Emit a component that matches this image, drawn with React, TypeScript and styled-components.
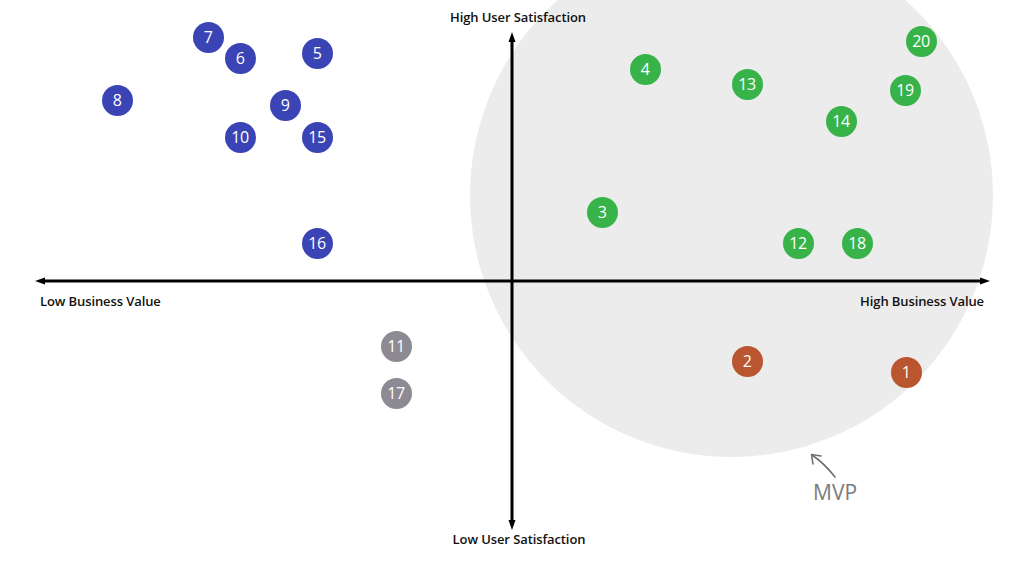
import React from "react";
import styled, { createGlobalStyle, css } from "styled-components";

const Global = createGlobalStyle`
  html, body { margin: 0; padding: 0; background: #ffffff; }
  body { font-family: "Open Sans", "Noto Sans", sans-serif; }
`;

const Stage = styled.div`
  position: relative;
  width: 1024px;
  height: 563px;
  overflow: hidden;
  background: #ffffff;
`;

const MvpZone = styled.div`
  position: absolute;
  left: 470px;
  top: -66px;
  width: 523px;
  height: 523px;
  border-radius: 50%;
  background: #ececec;
`;

const Axes = styled.svg`
  position: absolute;
  inset: 0;
  width: 1024px;
  height: 563px;
`;

const labelText = css`
  position: absolute;
  font-family: "Open Sans", "Noto Sans", sans-serif;
  font-weight: 600;
  font-size: 13px;
  letter-spacing: -0.1px;
  color: #111111;
  white-space: nowrap;
  line-height: 1;
`;

const TopLabel = styled.div`
  ${labelText};
  left: 518px;
  top: 11px;
  transform: translateX(-50%);
`;

const BottomLabel = styled.div`
  ${labelText};
  left: 519px;
  top: 533px;
  transform: translateX(-50%);
`;

const LeftLabel = styled.div`
  ${labelText};
  left: 40px;
  top: 295px;
`;

const RightLabel = styled.div`
  ${labelText};
  right: 40px;
  top: 295px;
`;

type Kind = "blue" | "green" | "gray" | "rust";
const colors: Record<Kind, string> = {
  blue: "#3a44b4",
  green: "#37b34a",
  gray: "#8d8a94",
  rust: "#b9552f",
};

const Dot = styled.div<{ $kind: Kind }>`
  position: absolute;
  width: 31px;
  height: 31px;
  margin: -15.5px 0 0 -15.5px;
  border-radius: 50%;
  background: ${(p) => colors[p.$kind]};
  color: #ffffff;
  display: flex;
  align-items: center;
  justify-content: center;
  font-family: "Open Sans", "Noto Sans", sans-serif;
  font-weight: 500;
  font-size: 16px;
  letter-spacing: -0.4px;
  line-height: 1;
`;

const MvpLabel = styled.div`
  position: absolute;
  left: 813px;
  top: 482px;
  font-family: "Open Sans", "Noto Sans", sans-serif;
  font-size: 21px;
  font-weight: 400;
  color: #7b7b7b;
  line-height: 1;
`;

const dots: { n: number; x: number; y: number; k: Kind }[] = [
  { n: 7, x: 208, y: 37, k: "blue" },
  { n: 6, x: 240, y: 58, k: "blue" },
  { n: 5, x: 317, y: 53, k: "blue" },
  { n: 8, x: 117, y: 100, k: "blue" },
  { n: 9, x: 285, y: 105, k: "blue" },
  { n: 10, x: 240, y: 137, k: "blue" },
  { n: 15, x: 317, y: 137, k: "blue" },
  { n: 16, x: 317, y: 243, k: "blue" },
  { n: 4, x: 645, y: 69, k: "green" },
  { n: 13, x: 747, y: 84, k: "green" },
  { n: 20, x: 921, y: 41, k: "green" },
  { n: 19, x: 905, y: 90, k: "green" },
  { n: 14, x: 841, y: 121, k: "green" },
  { n: 3, x: 602, y: 212, k: "green" },
  { n: 12, x: 798, y: 243, k: "green" },
  { n: 18, x: 857, y: 243, k: "green" },
  { n: 11, x: 396, y: 346, k: "gray" },
  { n: 17, x: 396, y: 393, k: "gray" },
  { n: 2, x: 747, y: 361, k: "rust" },
  { n: 1, x: 906, y: 372, k: "rust" },
];

export default function App() {
  return (
    <>
      <Global />
      <Stage>
        <MvpZone />
        <Axes viewBox="0 0 1024 563">
          <line x1="42" y1="281" x2="982" y2="281" stroke="#000" strokeWidth="3" />
          <polygon points="35,281 45,277.5 45,284.5" fill="#000" />
          <polygon points="990,281 980,277.5 980,284.5" fill="#000" />
          <line x1="512" y1="40" x2="512" y2="522" stroke="#000" strokeWidth="3" />
          <polygon points="512,32 508.5,42 515.5,42" fill="#000" />
          <polygon points="512,530 508.5,520 515.5,520" fill="#000" />
          <path d="M835 477 Q824 463 812 455" fill="none" stroke="#6f6f6f" strokeWidth="1.6" strokeLinecap="round" />
          <path d="M813 464 L811.5 454.5 L821 456" fill="none" stroke="#6f6f6f" strokeWidth="1.6" strokeLinecap="round" strokeLinejoin="round" />
        </Axes>
        <TopLabel>High User Satisfaction</TopLabel>
        <BottomLabel>Low User Satisfaction</BottomLabel>
        <LeftLabel>Low Business Value</LeftLabel>
        <RightLabel>High Business Value</RightLabel>
        {dots.map((d) => (
          <Dot key={d.n} $kind={d.k} style={{ left: d.x, top: d.y }}>
            {d.n}
          </Dot>
        ))}
        <MvpLabel>MVP</MvpLabel>
      </Stage>
    </>
  );
}
